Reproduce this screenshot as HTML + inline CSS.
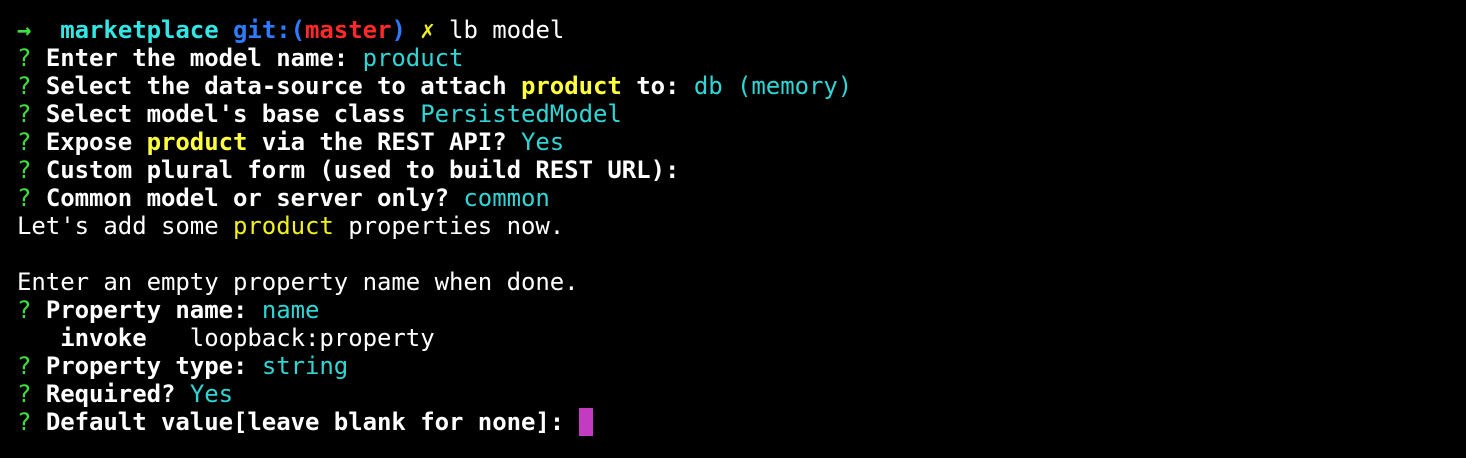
<html><head><style>
body{margin:0;background:#000;width:1466px;height:458px;overflow:hidden}
pre{margin:0;position:absolute;left:17px;top:16px;font-family:"DejaVu Sans Mono","Liberation Mono",monospace;font-size:24px;line-height:28px;color:#fff;letter-spacing:-0.05px}
.g{color:#3ee23e}.c{color:#2fd6d6}.bc{color:#33e6e6;font-weight:bold}.bl{color:#2d7cff;font-weight:bold}.r{color:#ff2a2a;font-weight:bold}.y{color:#f0f020}.by{color:#ffff40;font-weight:bold}b{font-weight:bold}
.cur{display:inline-block;width:14px;height:28px;background:#c23bc0;vertical-align:top}
.ar{font-weight:bold}
</style></head><body><pre><span class="g ar">→</span>  <span class="bc">marketplace</span> <span class="bl">git:(</span><span class="r">master</span><span class="bl">)</span> <span class="y">✗</span> lb model
<span class="g">?</span> <b>Enter the model name:</b> <span class="c">product</span>
<span class="g">?</span> <b>Select the data-source to attach <span class="by">product</span> to:</b> <span class="c">db (memory)</span>
<span class="g">?</span> <b>Select model's base class</b> <span class="c">PersistedModel</span>
<span class="g">?</span> <b>Expose <span class="by">product</span> via the REST API?</b> <span class="c">Yes</span>
<span class="g">?</span> <b>Custom plural form (used to build REST URL):</b>
<span class="g">?</span> <b>Common model or server only?</b> <span class="c">common</span>
Let's add some <span class="y">product</span> properties now.

Enter an empty property name when done.
<span class="g">?</span> <b>Property name:</b> <span class="c">name</span>
   <b>invoke</b>   loopback:property
<span class="g">?</span> <b>Property type:</b> <span class="c">string</span>
<span class="g">?</span> <b>Required?</b> <span class="c">Yes</span>
<span class="g">?</span> <b>Default value[leave blank for none]:</b> <span class="cur"></span></pre></body></html>
